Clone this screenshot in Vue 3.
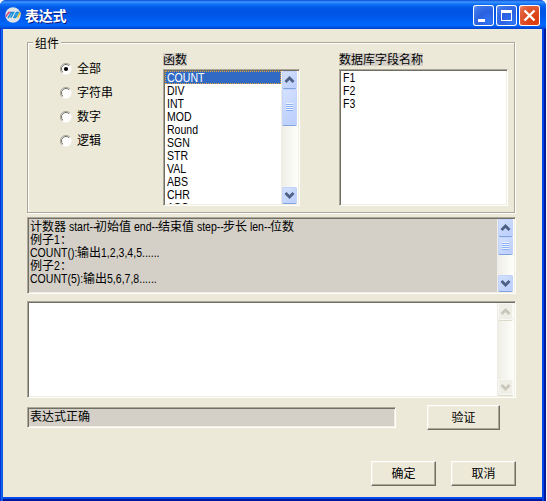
<script setup>
const filters = ['全部', '字符串', '数字', '逻辑']
const functions = ['COUNT', 'DIV', 'INT', 'MOD', 'Round', 'SGN', 'STR', 'VAL', 'ABS', 'CHR', 'ASC']
const fields = ['F1', 'F2', 'F3']
// Each run is [text, width]; runs with a width are set in condensed Latin.
const help = [
  [['计数器'], [' start--', 29], ['初始值'], [' end--', 27], ['结束值'], [' step--', 29], ['步长'], [' len--', 23], ['位数']],
  [['例子'], ['1', 6], ['：']],
  [['COUNT():', 47], ['输出'], ['1,2,3,4,5......', 60]],
  [['例子'], ['2', 6], ['：']],
  [['COUNT(5):', 53], ['输出'], ['5,6,7,8......', 54]],
]
</script>

<template>
  <div class="window">
    <header class="title">
      <svg class="logo" width="16" height="16" viewBox="0 0 16 16">
        <circle cx="8" cy="8" r="7.7" fill="#dfe2e6" />
        <path d="M.8 9.6 3.8 5.6H6.2" fill="none" stroke="#d8437c" stroke-width="1.5" />
        <path d="M3 11 6.5 5.6H8.6L5.6 10.6M8.6 11 11.5 5.6H13.4L11.4 9.6 9.6 10.8" fill="none" stroke="#1590de" stroke-width="1.5" />
        <path d="M12.4 10.6 15.4 5.4" stroke="#e7c63c" stroke-width="1.6" />
      </svg>
      <h1>表达式</h1>
      <div class="controls">
        <span class="ctl"><svg width="21" height="21"><path d="M5 14h7v3H5z" fill="#fff" /></svg></span>
        <span class="ctl"><svg width="21" height="21"><path d="M5 5h11v11H5zM6 8v7h9V8z" fill="#fff" fill-rule="evenodd" /></svg></span>
        <span class="ctl close"><svg width="21" height="21"><path d="M5.5 5.5 15.5 15.5M15.5 5.5 5.5 15.5" stroke="#fff" stroke-width="2.4" /></svg></span>
      </div>
    </header>

    <main class="client">
      <section class="group">
        <div class="legend">组件</div>
        <div class="cols">
          <div class="radios">
            <label v-for="(f, i) in filters" :key="f" class="radio">
              <svg width="12" height="12" viewBox="0 0 12 12">
                <circle cx="6" cy="6" r="5.5" fill="#fff" />
                <path d="M2 10A5.5 5.5 0 0 1 10 2" fill="none" stroke="#aca899" />
                <path d="M2.8 9.2A4.5 4.5 0 0 1 9.2 2.8" fill="none" stroke="#716f64" />
                <circle v-if="i === 0" cx="6" cy="6" r="2.1" fill="#000" />
              </svg>
              <span>{{ f }}</span>
            </label>
          </div>

          <div class="col">
            <div class="caption">函数</div>
            <div class="box list functions">
              <div class="items">
                <div v-for="(f, i) in functions" :key="f" class="item" :class="{ selected: i === 0 }"><span class="latin">{{ f }}</span></div>
              </div>
              <div class="bar">
                <span class="sb"><svg width="15" height="16"><path d="M3.5 10 7.5 6 11.5 10" /></svg></span>
                <span class="sb thumb tall"><i></i></span>
                <span class="sb end"><svg width="15" height="16"><path d="M3.5 6 7.5 10 11.5 6" /></svg></span>
              </div>
            </div>
          </div>

          <div class="col">
            <div class="caption">数据库字段名称</div>
            <div class="box list fields">
              <div class="items">
                <div v-for="f in fields" :key="f" class="item"><span class="latin">{{ f }}</span></div>
              </div>
            </div>
          </div>
        </div>
      </section>

      <div class="box help">
        <div class="lines">
          <div v-for="(line, n) in help" :key="n" class="line">
            <span v-for="(run, i) in line" :key="i" class="run" :class="{ han: !run[1] }" :style="run[1] ? { width: run[1] + 'px' } : null"><span :class="{ latin: run[1] }">{{ run[0] }}</span></span>
          </div>
        </div>
        <div class="bar">
          <span class="sb"><svg width="15" height="16"><path d="M3.5 10 7.5 6 11.5 10" /></svg></span>
          <span class="sb thumb"><i></i></span>
          <span class="sb end"><svg width="15" height="16"><path d="M3.5 6 7.5 10 11.5 6" /></svg></span>
        </div>
      </div>

      <div class="box editor">
        <div class="lines"></div>
        <div class="bar disabled">
          <span class="sb"><svg width="15" height="16"><path d="M3.5 10 7.5 6 11.5 10" /></svg></span>
          <span class="sb end"><svg width="15" height="16"><path d="M3.5 6 7.5 10 11.5 6" /></svg></span>
        </div>
      </div>

      <div class="check">
        <div class="box status">表达式正确</div>
        <button class="btn verify">验证</button>
      </div>

      <footer class="actions">
        <button class="btn">确定</button>
        <button class="btn">取消</button>
      </footer>
    </main>
  </div>
</template>

<style>
body {
  margin: 0;
  background: #f4f4fa;
  overflow: hidden;
}
</style>

<style scoped>
* {
  box-sizing: border-box;
}
.window {
  width: 546px;
  height: 501px;
  display: flex;
  flex-direction: column;
  background: linear-gradient(90deg, #0831d9 0, #0831d9 1px, #166aee 1px, #0855dd 3px, #0855dd 542px, #0048f0 542px, #0040e0 544px, #001ea0 544px, #00138c 546px);
  border-radius: 6px 6px 0 0;
  overflow: hidden;
  font: 12px/13px "Liberation Sans", "Noto Sans CJK SC", sans-serif;
  color: #000;
}
.title {
  height: 29px;
  flex: none;
  display: flex;
  align-items: center;
  padding: 1px 6px 0 5px;
  background: linear-gradient(180deg, #0a4bd8 0, #3f97ff 2px, #1273f8 4px, #0058e6 8px, #0054e3 13px, #005bf0 19px, #0068ff 25px, #0058e6 27px, #003dce 29px);
}
.logo {
  flex: none;
}
h1 {
  flex: 1;
  margin: 0 0 0 4px;
  font: bold 14px/20px "Noto Sans CJK SC", sans-serif;
  letter-spacing: -0.3px;
  color: #fff;
  text-shadow: 1px 1px #0a1883;
}
.controls {
  display: flex;
  gap: 2px;
  padding-top: 1px;
}
.ctl {
  width: 21px;
  height: 21px;
  border-radius: 3px;
  background: radial-gradient(circle at 75% 80%, #2f75f5 0, #2a60e0 45%, #3e76ea 75%, #6c9bf5 100%);
  box-shadow: inset 0 0 0 1px #fff;
}
.ctl svg {
  display: block;
}
.close {
  background: radial-gradient(circle at 75% 80%, #dc3a08 0, #dc4a22 45%, #e36440 75%, #f09a80 100%);
}
.client {
  width: 539px;
  height: 468px;
  margin-left: 3px;
  padding: 13px 26px 0 24px;
  background: #ece9d8;
  box-shadow: 0 2px #0048e8, 0 4px #00189c;
}
.group {
  width: 488px;
  height: 171px;
  border: 1px solid #aca899;
  box-shadow: 1px 1px #fff, inset 1px 1px #fff;
}
.legend {
  width: 28px;
  height: 13px;
  margin: -6px 0 0 5px;
  padding-left: 2px;
  line-height: 15px;
  background: #ece9d8;
  white-space: nowrap;
}
.cols {
  display: grid;
  grid-template-columns: 135px 176px 1fr;
}
.radios {
  padding: 7px 0 0 32px;
}
.radio {
  height: 24px;
  display: flex;
  align-items: center;
  gap: 5px;
}
.col {
  padding-top: 3px;
}
.caption {
  width: fit-content;
  height: 13px;
  margin-bottom: 3px;
  line-height: 15px;
  background: #d4d0c8;
}
.box {
  background: #fff;
  border: 1px solid;
  border-color: #aca899 #fff #fff #aca899;
  box-shadow: inset 1px 1px #716f64, inset -1px -1px #f1efe2;
  padding: 1px;
  display: flex;
  overflow: hidden;
}
.list {
  height: 137px;
}
.functions {
  width: 137px;
}
.fields {
  width: 169px;
}
.items {
  flex: 1;
  overflow: hidden;
}
.item {
  height: 13px;
  padding-left: 2px;
}
.latin {
  display: inline-block;
  font-size: 13px;
  line-height: 13px;
  vertical-align: top;
  white-space: pre;
  transform: scaleX(0.81);
  transform-origin: 0 0;
}
.selected {
  background: #316ac5;
  color: #fff;
  outline: 1px dotted #e8a33d;
  outline-offset: -1px;
}
.bar {
  width: 17px;
  flex: none;
  display: flex;
  flex-direction: column;
  align-items: center;
  gap: 1px;
  background: linear-gradient(90deg, #eeede5, #fefefb);
}
.sb {
  width: 15px;
  height: 17px;
  flex: none;
  border-radius: 2px;
  background: linear-gradient(135deg, #d5e2ff, #b9cdfb);
  box-shadow: inset 0 0 0 1px #c3d3fd, 0 1px #7ea2dc;
  display: flex;
  align-items: center;
  justify-content: center;
}
.sb path {
  fill: none;
  stroke: #4d6185;
  stroke-width: 2.8;
}
.end {
  margin-top: auto;
  height: 16px;
  margin-bottom: 1px;
}
.tall {
  height: 36px;
}
.thumb i {
  width: 7px;
  height: 8px;
  background: repeating-linear-gradient(180deg, #eef4fe 0 1px, #8cb0f8 1px 2px);
}
.disabled .sb {
  background: #efeee7;
  box-shadow: inset 0 0 0 1px #f8f8f3, 0 1px #dcdacb;
}
.disabled path {
  stroke: #c9c7ba;
}
.help {
  width: 489px;
  height: 77px;
  margin-top: 4px;
  background: #d4d0c8;
}
.lines {
  flex: 1;
  padding: 1px 0 0 1px;
}
.line {
  height: 13px;
  display: flex;
  white-space: pre;
}
.run {
  flex: none;
}
.han {
  line-height: 15px;
}
.editor {
  width: 489px;
  height: 97px;
  margin-top: 7px;
}
.check {
  display: flex;
  justify-content: space-between;
  width: 473px;
  margin-top: 7px;
}
.status {
  width: 369px;
  height: 21px;
  margin-top: 2px;
  padding: 2px 0 0 2px;
  line-height: 15px;
  background: #d4d0c8;
}
.btn {
  width: 65px;
  height: 25px;
  padding: 1px 0 0;
  font: inherit;
  color: #000;
  background: #ece9d8;
  border: 1px solid;
  border-color: #fff #716f64 #716f64 #fff;
  box-shadow: inset -1px -1px #aca899, inset 1px 1px #f1efe2;
}
.verify {
  width: 73px;
}
.actions {
  display: flex;
  justify-content: flex-end;
  gap: 15px;
  margin-top: 31px;
}
</style>
